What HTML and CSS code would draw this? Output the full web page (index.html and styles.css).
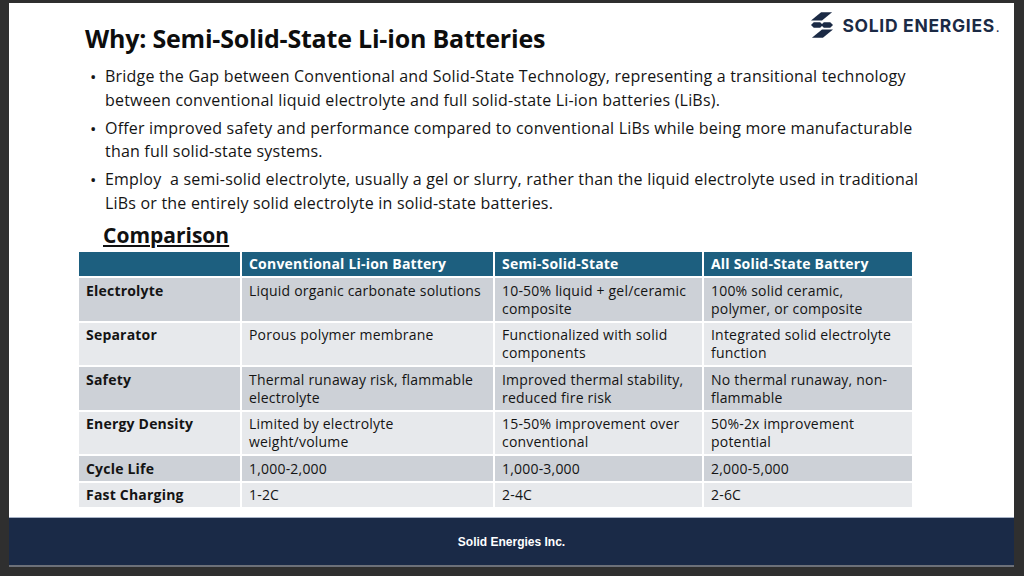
FILE: index.html
```html
<!DOCTYPE html>
<html lang="en">
<head>
<meta charset="utf-8">
<title>Why: Semi-Solid-State Li-ion Batteries</title>
<link rel="stylesheet" href="styles.css">
</head>
<body>
<div class="slide">
  <div class="content">
    <header class="head">
      <h1 class="title">Why: Semi-Solid-State Li-ion Batteries</h1>
      <div class="logo">
        <svg class="logo-icon" viewBox="0 0 24 28" width="22" height="26" aria-hidden="true">
          <polygon points="11,0 23,0 12,9 0,9" fill="#1b2a45"/>
          <polygon points="3,11 10,11 13,14 10,17 3,17 0,14" fill="#1b2a45"/>
          <polygon points="14,11 21,11 24,14 21,17 14,17 11,14" fill="#1b2a45"/>
          <polygon points="12,19 24,19 13,28 1,28" fill="#1b2a45"/>
        </svg>
        <span class="logo-text">SOLID ENERGIES<span class="logo-dot">.</span></span>
      </div>
    </header>
    <ul class="bullets">
      <li><span class="dot">•</span><span>Bridge the Gap between Conventional and Solid-State Technology, representing a transitional technology between conventional liquid electrolyte and full solid-state Li-ion batteries (LiBs).</span></li>
      <li><span class="dot">•</span><span>Offer improved safety and performance compared to conventional LiBs while being more manufacturable than full solid-state systems.</span></li>
      <li><span class="dot">•</span><span>Employ&nbsp; a semi-solid electrolyte, usually a gel or slurry, rather than the liquid electrolyte used in traditional LiBs or the entirely solid electrolyte in solid-state batteries.</span></li>
    </ul>
    <h2 class="sub">Comparison</h2>
    <table class="cmp">
      <colgroup>
        <col class="c1"><col class="c2"><col class="c3"><col class="c4">
      </colgroup>
      <thead>
        <tr><th></th><th>Conventional Li-ion Battery</th><th>Semi-Solid-State</th><th>All Solid-State Battery</th></tr>
      </thead>
      <tbody>
        <tr class="dark"><td class="k">Electrolyte</td><td>Liquid organic carbonate solutions</td><td>10-50% liquid + gel/ceramic composite</td><td>100% solid ceramic, polymer, or composite</td></tr>
        <tr class="light"><td class="k">Separator</td><td>Porous polymer membrane</td><td>Functionalized with solid components</td><td>Integrated solid electrolyte function</td></tr>
        <tr class="dark"><td class="k">Safety</td><td>Thermal runaway risk, flammable electrolyte</td><td>Improved thermal stability, reduced fire risk</td><td>No thermal runaway, non-flammable</td></tr>
        <tr class="light"><td class="k">Energy Density</td><td>Limited by electrolyte weight/volume</td><td>15-50% improvement over conventional</td><td>50%-2x improvement potential</td></tr>
        <tr class="dark"><td class="k">Cycle Life</td><td>1,000-2,000</td><td>1,000-3,000</td><td>2,000-5,000</td></tr>
        <tr class="light"><td class="k">Fast Charging</td><td>1-2C</td><td>2-4C</td><td>2-6C</td></tr>
      </tbody>
    </table>
  </div>
  <footer class="foot">Solid Energies Inc.</footer>
</div>
</body>
</html>
```
FILE: styles.css
```css
html, body {
  margin: 0;
  padding: 0;
  background: #2f2f2f;
}
body {
  width: 1024px;
  height: 576px;
  overflow: hidden;
}
.slide {
  margin: 3px 0 0 9px;
  width: 1005px;
  height: 564px;
  background: #ffffff;
  display: flex;
  flex-direction: column;
  font-family: "Open Sans", sans-serif;
  color: #141414;
}
.content {
  flex: 1;
  display: flex;
  flex-direction: column;
}
.head {
  display: flex;
  justify-content: space-between;
  align-items: flex-start;
  padding: 0 14px 0 76px;
}
.title {
  margin: 20px 0 0 0;
  font-size: 25px;
  line-height: 30px;
  font-weight: 700;
  letter-spacing: -0.2px;
  color: #0d0d0d;
}
.logo {
  margin-top: 9px;
  display: flex;
  align-items: center;
  gap: 9px;
}
.logo-icon {
  display: block;
}
.logo-text {
  font-family: Inter, "Noto Sans", sans-serif;
  font-weight: 700;
  font-size: 17.5px;
  letter-spacing: 0.7px;
  color: #1b2a45;
}
.logo-dot {
  font-size: 10px;
  margin-left: 1px;
}
.bullets {
  list-style: none;
  margin: 12px 0 0 0;
  padding: 0 80px 0 81px;
  font-size: 16px;
  line-height: 23.5px;
  letter-spacing: 0.2px;
}
.bullets li {
  display: flex;
  margin-bottom: 4.5px;
}
.bullets .dot {
  flex: 0 0 15px;
  font-size: 17px;
}
.sub {
  margin: 2px 0 4px 94px;
  font-size: 21px;
  line-height: 26px;
  font-weight: 700;
  text-decoration: underline;
  text-decoration-thickness: 2px;
  text-underline-offset: 2px;
  color: #111;
}
.cmp {
  margin-left: 70px;
  width: 833px;
  border-collapse: collapse;
  table-layout: fixed;
  font-size: 14px;
  line-height: 18px;
  letter-spacing: 0.2px;
}
.c1 { width: 162px; }
.c2 { width: 253px; }
.c3 { width: 209px; }
.c4 { width: 209px; }
.cmp th, .cmp td {
  text-align: left;
  vertical-align: top;
  padding: 3.5px 4px 3px 7px;
  border-right: 2px solid #ffffff;
  border-bottom: 2px solid #ffffff;
}
.cmp th:last-child, .cmp td:last-child {
  border-right: 0;
  padding-right: 14px;
}
.cmp th {
  background: #1d5f7f;
  color: #ffffff;
  font-weight: 700;
}
.cmp .dark td { background: #cdd1d7; }
.cmp .light td { background: #e7e9ec; }
.cmp .k { font-weight: 700; }
.cmp tbody tr:last-child td { border-bottom: 0; }
.foot {
  height: 47px;
  border-top: 1px solid #a8b3c6;
  border-bottom: 2px solid #6c7079;
  background: #1a2a47;
  color: #ffffff;
  font-family: "Liberation Sans", Arial, sans-serif;
  font-weight: 700;
  font-size: 12px;
  display: flex;
  align-items: center;
  justify-content: center;
}
```
